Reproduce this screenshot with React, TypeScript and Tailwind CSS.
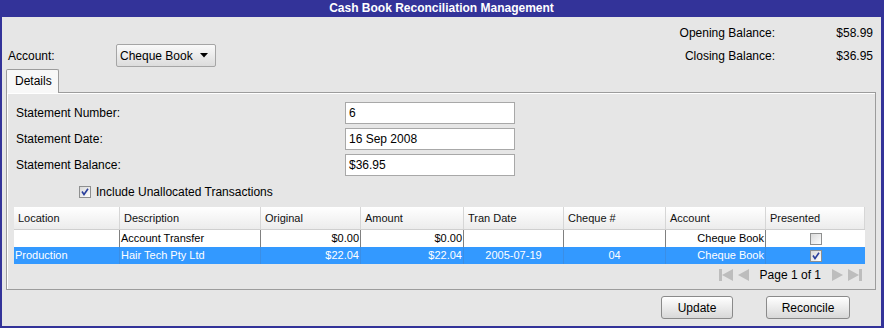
import React from "react";

const font = { fontFamily: '"Liberation Sans", Arial, sans-serif' };

const cols = [
  { name: "Location", w: 106 },
  { name: "Description", w: 141 },
  { name: "Original", w: 100 },
  { name: "Amount", w: 103 },
  { name: "Tran Date", w: 100 },
  { name: "Cheque #", w: 102 },
  { name: "Account", w: 100 },
  { name: "Presented", w: 99 },
];

function Check({ checked }: { checked: boolean }) {
  return (
    <svg width="12" height="12" viewBox="0 0 12 12">
      <defs>
        <linearGradient id={checked ? "gc" : "gu"} x1="0" y1="0" x2="1" y2="1">
          <stop offset="0" stopColor="#d8d8d8" />
          <stop offset="1" stopColor="#ffffff" />
        </linearGradient>
      </defs>
      <rect x="0.5" y="0.5" width="11" height="11" fill={`url(#${checked ? "gc" : "gu"})`} stroke="#8e8f8f" />
      {checked && (
        <path d="M3 5.5 L5 8.5 L9 2.8" fill="none" stroke="#2a3f9c" strokeWidth="1.6" />
      )}
    </svg>
  );
}

function PagerIcon({ kind }: { kind: "first" | "prev" | "next" | "last" }) {
  const c = "#bdbdbd";
  if (kind === "first")
    return (
      <svg width="14" height="14" viewBox="0 0 14 14">
        <rect x="0" y="1" width="3" height="12" fill={c} />
        <polygon points="14,1 14,13 3,7" fill={c} />
      </svg>
    );
  if (kind === "prev")
    return (
      <svg width="11" height="14" viewBox="0 0 11 14">
        <polygon points="11,1 11,13 0,7" fill={c} />
      </svg>
    );
  if (kind === "next")
    return (
      <svg width="11" height="14" viewBox="0 0 11 14">
        <polygon points="0,1 0,13 11,7" fill={c} />
      </svg>
    );
  return (
    <svg width="14" height="14" viewBox="0 0 14 14">
      <polygon points="0,1 0,13 11,7" fill={c} />
      <rect x="11" y="1" width="3" height="12" fill={c} />
    </svg>
  );
}

const gridCols = "grid grid-cols-[106px_141px_100px_103px_100px_102px_100px_99px]";

export default function App() {
  return (
    <div style={font} className="w-[884px] h-[328px] bg-[#e6e6e6] border-l-2 border-r-[3px] border-b-2 border-[#333399] flex flex-col text-[12px] text-black overflow-hidden">
      {/* Title bar */}
      <div className="h-[17px] bg-[#333399] text-white font-bold text-[12px] leading-[17px] text-center shrink-0">
        Cash Book Reconciliation Management
      </div>

      {/* Header */}
      <div className="flex h-[52px] pt-[4px] shrink-0">
        <div className="flex flex-col flex-1 pl-[6px]">
          <div className="h-[23px]" />
          <div className="h-[23px] flex items-center">
            <div className="w-[108px]">Account:</div>
            <div className="w-[100px] h-[23px] border border-[#a5a5a5] rounded-[2px] bg-gradient-to-b from-[#fafafa] to-[#dcdcdc] flex items-center pl-[3px] pr-[7px] justify-between">
              <span>Cheque Book</span>
              <svg width="8" height="5" viewBox="0 0 8 5">
                <polygon points="0,0 8,0 4,4.5" fill="#000" />
              </svg>
            </div>
          </div>
        </div>
        <div className="grid grid-cols-[auto_98px] pr-[8px] auto-rows-[23px] items-center">
          <div className="text-right">Opening Balance:</div>
          <div className="text-right">$58.99</div>
          <div className="text-right">Closing Balance:</div>
          <div className="text-right">$36.95</div>
        </div>
      </div>

      {/* Tabs */}
      <div className="pl-[4px] pr-[5px] shrink-0">
        <div className="flex h-[24px]">
          <div className="w-[53px] h-[24px] border border-b-0 border-[#9c9c9c] rounded-t-[2px] bg-[#f8f8f8] pl-[8px] leading-[23px] relative z-10">
            Details
          </div>
        </div>
        <div className="h-[198px] -mt-[1px] border border-[#9c9c9c] shadow-[inset_1px_1px_0_#ffffff] flex flex-col pl-[7px] pr-[9px] pt-[9px]">
          {/* Form rows */}
          <div className="flex flex-col gap-[4px]">
            {[
              ["Statement Number:", "6"],
              ["Statement Date:", "16 Sep 2008"],
              ["Statement Balance:", "$36.95"],
            ].map(([l, v]) => (
              <div key={l} className="flex items-center h-[22px]">
                <div className="w-[331px] pl-[2px]">{l}</div>
                <div className="w-[170px] h-[22px] border border-[#a8a8a8] bg-white pl-[3px] leading-[20px]">{v}</div>
              </div>
            ))}
          </div>
          <div className="flex items-center h-[16px] mt-[8px] pl-[65px] gap-[5px]">
            <Check checked={true} />
            <span>Include Unallocated Transactions</span>
          </div>

          {/* Table */}
          <div className="mt-[7px] w-[851px] text-[11px]">
            <div className={`${gridCols} h-[23px] bg-gradient-to-b from-[#ffffff] to-[#ececec] border-b border-[#cfcfcf]`}>
              {cols.map((c) => (
                <div key={c.name} className="border-r border-[#d6d6d6] pl-[4px] flex items-center text-[#111]">
                  {c.name}
                </div>
              ))}
            </div>
            <div className={`${gridCols} h-[17px] bg-white leading-[16px]`}>
              <div className="border-r border-[#808080]" />
              <div className="border-r border-[#808080] pl-[1px]">Account Transfer</div>
              <div className="border-r border-[#808080] text-right pr-[1px]">$0.00</div>
              <div className="border-r border-[#808080] text-right pr-[1px]">$0.00</div>
              <div className="border-r border-[#808080]" />
              <div className="border-r border-[#808080]" />
              <div className="border-r border-[#808080] text-right pr-[1px]">Cheque Book</div>
              <div className="flex items-center justify-center"><Check checked={false} /></div>
            </div>
            <div className={`${gridCols} h-[17px] bg-[#3399ff] text-white leading-[16px]`}>
              <div className="border-r border-[#3a8ee6] pl-[1px]">Production</div>
              <div className="border-r border-[#3a8ee6] pl-[1px]">Hair Tech Pty Ltd</div>
              <div className="border-r border-[#3a8ee6] text-right pr-[1px]">$22.04</div>
              <div className="border-r border-[#3a8ee6] text-right pr-[1px]">$22.04</div>
              <div className="border-r border-[#3a8ee6] text-center">2005-07-19</div>
              <div className="border-r border-[#3a8ee6] text-center">04</div>
              <div className="border-r border-[#3a8ee6] text-right pr-[1px]">Cheque Book</div>
              <div className="flex items-center justify-center"><Check checked={true} /></div>
            </div>
          </div>

          {/* Pager */}
          <div className="w-[851px] flex justify-end items-center h-[19px] mt-[1px] pr-[3px] gap-[5px] text-[12px]">
            <PagerIcon kind="first" />
            <PagerIcon kind="prev" />
            <span className="mx-[6px]">Page 1 of 1</span>
            <PagerIcon kind="next" />
            <PagerIcon kind="last" />
          </div>
        </div>
      </div>

      {/* Buttons */}
      <div className="flex justify-end gap-[33px] pr-[31px] mt-[6px] shrink-0">
        <button className="w-[72px] h-[23px] border border-[#8a8a8a] rounded-[3px] bg-gradient-to-b from-[#ffffff] to-[#d8d8d8] text-[12px]">
          Update
        </button>
        <button className="w-[84px] h-[23px] border border-[#8a8a8a] rounded-[3px] bg-gradient-to-b from-[#ffffff] to-[#d8d8d8] text-[12px]">
          Reconcile
        </button>
      </div>
    </div>
  );
}
